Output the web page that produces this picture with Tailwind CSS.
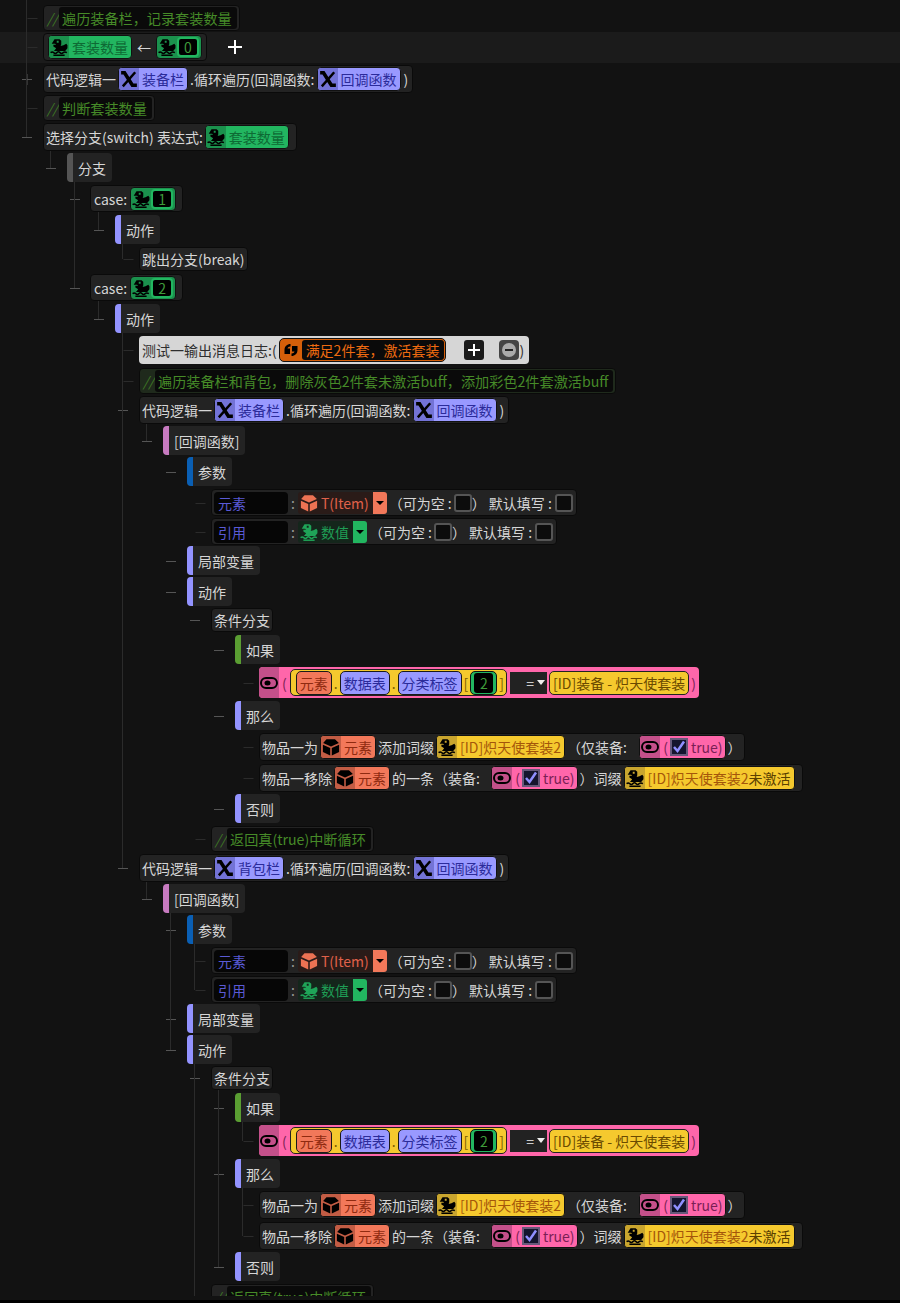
<!DOCTYPE html>
<html lang="zh">
<head>
  <meta charset="UTF-8"/>
  <meta name="viewport" content="width=device-width, initial-scale=1.0"/>
  <title>Logic tree</title>
  <script src="https://cdn.jsdelivr.net/npm/@tailwindcss/browser@4"></script>
</head>
<body class="bg-black m-0">
  <svg class="hidden">
    <symbol id="frog" viewBox="0 0 16 16"><path fill="currentColor" fill-rule="evenodd" d="M4 1h4.500L10 2.500v3L9.500 7l2.500-.5L14.500 5l1 1.500V9l-2 2.500H3.500L5.500 9 3 7.500V6h2.500L4.500 5 1.500 5zM6 2.500V4.200h1.700V2.500z"/><path d="M.5 13c1.200-1 1.800-1 2.800 0s1.800 1 2.800 0 1.800-1 2.800 0 1.800 1 2.800 0 1.800-1 3.300 0" fill="none" stroke="currentColor" stroke-width="1.300"/><path d="M3 15.300h10" fill="none" stroke="currentColor" stroke-width="1.300"/></symbol>
    <symbol id="chi" viewBox="0 0 16 16"><path d="M1 2.500h3L11 13.500h4" fill="none" stroke="currentColor" stroke-width="3.200"/><path d="M13.500 2 2.500 14.500" fill="none" stroke="currentColor" stroke-width="2.200"/></symbol>
    <symbol id="cube" viewBox="0 0 16 16"><path fill="currentColor" d="M4 1h7.500l3.500 3.500-7 3-7-3zM.8 6l6.500 2.900V15.500L.8 12.500zM15.200 6 8.700 8.900V15.500l6.500-3z"/></symbol>
    <symbol id="quote" viewBox="0 0 16 16"><path fill="currentColor" d="M7.500 2C4 2 1.500 4.500 1.500 8v4h5.500V6.500H4.500C4.800 5.300 5.800 4.500 7.500 4.500zM8.500 14c3.500 0 6-2.500 6-6V4H9v5.500h2.500c-.3 1.200-1.300 2-3 2z"/></symbol>
    <symbol id="eye" viewBox="0 0 18 12"><rect x="1" y="1" width="16" height="10" rx="5" fill="none" stroke="currentColor" stroke-width="2"/><ellipse cx="7.500" cy="6" rx="3" ry="2.500" fill="currentColor"/></symbol>
  </svg>

  <div class="h-[1300px] bg-[#121212] font-['Noto_Sans_CJK_SC','Noto_Sans',sans-serif] text-[14px] leading-none text-[#d6d6d6]">
    <div id="tree" class="relative h-[1296px] overflow-hidden pt-[5px]"></div>
  </div>

  <script>
    const pitch = {23:'h-[23px]',24:'h-[24px]',26:'h-[26px]',27:'h-[27px]',28:'h-[28px]',29:'h-[29px]',30:'h-[30px]',31:'h-[31px]',32:'h-[32px]',33:'h-[33px]',34:'h-[34px]'};
    const indent = ['ml-[43px]','ml-[67px]','ml-[90px]','ml-[115px]','ml-[139px]','ml-[163px]','ml-[187px]','ml-[211px]','ml-[235px]','ml-[259px]'];
    const icon = (id, cls) => `<svg class="${cls}"><use href="#${id}"/></svg>`;

    // chip colours
    const tone = {
      green:  {main:'bg-[#22b660] text-[#0e6a34]', side:'bg-[#1b914d]'},
      purple: {main:'bg-[#9999ff] text-[#2b2b9a]', side:'bg-[#7373d6]'},
      red:    {main:'bg-[#f2785a] text-[#8f2a10]', side:'bg-[#c25c44]'},
      yellow: {main:'bg-[#f5c92e] text-[#a4560a]', side:'bg-[#c9a52e]'},
    };
    const ico = {green:'frog', purple:'chi', red:'cube', yellow:'frog'};

    const txt = s => `<span class="whitespace-pre">${s}</span>`;
    const chip = (c, label) => `<span class="flex h-[24px] shrink-0 overflow-hidden rounded-[4px] border border-[#111] ${tone[c].main}">
      <span class="flex w-[20px] items-center justify-center ${tone[c].side}">${icon(ico[c], 'h-[18px] w-[18px] text-black')}</span>
      <span class="flex items-center whitespace-pre pl-[3px] pr-[3px]">${label}</span></span>`;
    const num = n => `<span class="flex h-[24px] shrink-0 overflow-hidden rounded-[4px] border border-[#111] bg-[#1b914d]">
      <span class="flex w-[20px] items-center justify-center">${icon('frog', 'h-[18px] w-[18px] text-black')}</span>
      <span class="my-[1px] mr-[2px] flex w-[22px] items-center justify-center rounded-[4px] border-2 border-[#22b660] bg-black text-[#3f9a3a]">${n}</span></span>`;
    const check = `<span class="h-[18px] w-[18px] shrink-0 rounded-[3px] border-2 border-[#555] bg-[#0c0c0c]"></span>`;
    const eye = `<span class="flex w-[20px] self-stretch items-center justify-center bg-[#c4508a]">${icon('eye', 'h-[12px] w-[18px] text-black')}</span>`;
    const bool = `<span class="flex h-[24px] shrink-0 items-center overflow-hidden rounded-[4px] border border-[#111] bg-[#ff66aa] text-[#7a1f55]">${eye}
      <span class="ml-[3px]">(</span>
      <span class="ml-[2px] mr-[3px] flex h-[18px] w-[18px] items-center justify-center border-2 border-[#66597a] bg-[#15152e]"><svg class="h-[14px] w-[14px]" viewBox="0 0 14 14"><path d="M2 7l3.500 4L12 1.500" fill="none" stroke="#8f8fff" stroke-width="2.500"/></svg></span>
      <span class="whitespace-pre pr-[2px]">true)</span></span>`;

    // box kinds
    const plain = (h, parts) => `<div class="flex ${h} w-fit items-center gap-[2px] rounded-[4px] border border-[#0a0a0a] bg-[#232323] px-[2px]">${parts.join('')}</div>`;
    const tag = (bar, label) => `<div class="flex h-[29px] w-fit items-center overflow-hidden rounded-[4px] bg-[#232323] pr-[6px]"><span class="h-full w-[6px] ${bar}"></span><span class="ml-[5px] whitespace-pre">${label}</span></div>`;
    const note = (label, slash) => `<div class="flex h-[26px] w-fit items-center rounded-[4px] border border-[#0a0a0a] ${slash} pr-[2px]"><span class="w-[15px] pl-[3px] italic text-[#3f7a25]">//</span><span class="flex h-[22px] items-center whitespace-pre rounded-[3px] bg-[#0a0a0a] pl-[3px] pr-[5px] text-[14.15px] text-[#468a28]">${label}</span></div>`;
    const caseBox = n => plain('h-[27px]', [txt('<span class="mx-[1px]">case:</span>'), num(n), '<span class="w-[2px]"></span>']);

    const param = (name, type, c) => {
      const label = c == 'red' ? 'text-[#e0614a]' : 'text-[#1f9d55]';
      const wash = c == 'red' ? 'bg-[#2a1b18]' : 'bg-[#14261b]';
      const btn = c == 'red' ? 'bg-[#f2785a]' : 'bg-[#22b660]';
      const icoCol = c == 'red' ? 'text-[#ec7253]' : 'text-[#1fa458]';
      return `<div class="flex h-[27px] w-fit items-center rounded-[4px] border border-[#0a0a0a] bg-[#232323] px-[2px]">
        <span class="flex h-[22px] w-[74px] items-center rounded-[4px] bg-[#060606] pl-[4px] text-[#5a5ad6]">${name}</span>
        <span class="mx-[3px] text-[#9a9a9a]">:</span>
        <span class="flex h-[22px] items-center rounded-l-[3px] ${wash} pl-[2px] pr-[4px] ${label}">${icon(ico[c], 'mr-[3px] h-[18px] w-[18px] ' + icoCol)}${type}</span>
        <span class="flex h-[22px] w-[14px] items-center justify-center rounded-r-[3px] ${btn}"><svg class="h-[4px] w-[8px]" viewBox="0 0 8 4"><path d="M0 0h8L4 4z"/></svg></span>
        <span class="ml-[2px] whitespace-pre">（可为空 :</span><span class="ml-[2px] flex">${check}</span>
        <span class="whitespace-pre">） </span><span class="mr-[3px] whitespace-pre">默认填写 :</span>${check}<span class="w-[1px]"></span></div>`;
    };

    const sub = (extra, label) => `<span class="flex h-[24px] items-center whitespace-pre rounded-[5px] border border-[#1a1a1a] px-[3px] ${extra}">${label}</span>`;
    const expr = `<div class="flex h-[31px] w-fit items-center overflow-hidden rounded-[4px] bg-[#ff66aa] pr-[3px] text-[#7a1f55]">${eye}
      <span class="ml-[3px] mr-[3px]">(</span>
      <span class="flex h-[27px] items-center gap-[2px] rounded-[5px] border border-[#222] bg-[#f5c92e] pl-[5px] pr-[2px] text-[#7a5a00]">
        ${sub('bg-[#f2785a] text-[#8f2a10]', '元素')}<span>.</span>${sub('bg-[#9999ff] text-[#2b2b9a]', '数据表')}<span>.</span>${sub('bg-[#9999ff] text-[#2b2b9a]', '分类标签')}<span>[</span>
        <span class="flex h-[24px] w-[27px] items-center justify-center rounded-[5px] border border-[#111] bg-[#22b660]"><span class="flex h-[20px] w-[19px] items-center justify-center rounded-[3px] bg-black text-[#3f9a3a]">2</span></span><span>]</span>
      </span>
      <span class="ml-[3px] flex h-[22px] w-[37px] items-center justify-end gap-[3px] bg-[#222] pr-[2px] text-[#ccc]">=<svg class="h-[5px] w-[8px]" viewBox="0 0 8 5"><path d="M0 0h8L4 5z" fill="#eee"/></svg></span>
      <span class="ml-[2px] flex h-[24px] items-center whitespace-pre rounded-[5px] border border-[#222] bg-[#f5c92e] px-[3px] text-[#6a4a00]">[ID]装备 - 炽天使套装</span>
      <span class="ml-[2px]">)</span></div>`;
    const loop = bag => plain('h-[28px]', [txt('代码逻辑一'), chip('purple', bag), txt('.循环遍历(回调函数:'), chip('purple', '回调函数'), txt('<span class="ml-[1px] mr-[2px]">)</span>')]);

    const purpleBar = 'bg-[#9393ff]';
    const noteBg = 'bg-[#232323]';
    const body = [
      [5, 31, 0, 1, tag('bg-[#c77ac0]', '[回调函数]')],
      [6, 32, 0, 1, tag('bg-[#0a5fb4]', '参数')],
      [7, 29, 1, 0, param('元素', 'T(Item)', 'red')],
      [7, 28, 1, 0, param('引用', '数值', 'green')],
      [6, 31, 0, 1, tag(purpleBar, '局部变量')],
      [6, 31, 0, 1, tag(purpleBar, '动作')],
      [7, 27, 0, 1, plain('h-[24px]', [txt('条件分支')])],
      [8, 32, 0, 1, tag('bg-[#5a9e32]', '如果')],
      [9, 34, 1, 0, expr],
      [8, 32, 0, 1, tag(purpleBar, '那么')],
      [9, 31, 1, 0, plain('h-[28px]', [txt('物品一为'), chip('red', '元素'), txt('添加词缀'), chip('yellow', '[ID]炽天使套装2'), txt('（仅装备:  <span class="ml-[4px]"></span>'), bool, txt('）')])],
      [9, 30, 1, 0, plain('h-[28px]', [txt('物品一移除'), chip('red', '元素'), txt('的一条（装备:  <span class="ml-[3px]"></span>'), bool, txt('）词缀'), chip('yellow', '[ID]炽天使套装2<span class="text-[#5a4000]">未激活</span>'), txt(' ')])],
      [8, 32, 0, 1, tag(purpleBar, '否则')],
      [7, 28, 1, 0, note('返回真(true)中断循环', noteBg)],
    ];
    const rows = [
      [0, 28, 1, 0, note('遍历装备栏，记录套装数量', noteBg)],
      [0, 32, 1, 0, `<div class="flex items-center"><div class="flex h-[28px] w-fit items-center gap-[5px] rounded-[4px] border border-[#0a0a0a] bg-[#232323] pl-[4px] pr-[4px]">${chip('green', '套装数量')}${txt('←')}${num(0)}</div><svg class="ml-[21px] h-[14px] w-[14px]" viewBox="0 0 14 14"><path d="M7 0v14M0 7h14" stroke="#fff" stroke-width="2"/></svg></div>`],
      [0, 30, 2, 0, plain('h-[28px]', [txt('代码逻辑一'), chip('purple', '装备栏'), txt('.循环遍历(回调函数:'), chip('purple', '回调函数'), txt('<span class="ml-[1px] mr-[2px]">)</span>')])],
      [0, 28, 1, 0, note('判断套装数量', noteBg)],
      [0, 30, 0, 1, plain('h-[28px]', [txt('选择分支(switch) 表达式:'), chip('green', '套装数量'), txt(' ')])],
      [1, 32, 0, 1, tag('bg-[#555]', '分支')],
      [2, 30, 0, 1, caseBox(1)],
      [3, 32, 0, 1, tag(purpleBar, '动作')],
      [4, 27, 1, 0, plain('h-[24px]', [txt('跳出分支(break)')])],
      [2, 30, 0, 1, caseBox(2)],
      [3, 32, 0, 1, tag(purpleBar, '动作')],
      [4, 32, 1, 0, `<div class="flex h-[28px] w-fit items-center rounded-[4px] bg-[#d6d6d6] px-[3px] text-[#2e2e2e]">${txt('测试一输出消息日志:(')}
        <span class="ml-[2px] flex h-[24px] overflow-hidden rounded-[5px] border border-[#111] bg-[#d45f0a]"><span class="flex w-[22px] items-center justify-center">${icon('quote', 'h-[16px] w-[16px] text-black')}</span><span class="my-[1px] mr-[1px] flex items-center rounded-[3px] bg-[#0a0a0a] pl-[4px] pr-[5px] text-[#ee6a10]">满足2件套，激活套装</span></span>
        <span class="ml-[18px] flex h-[20px] w-[20px] items-center justify-center rounded-[3px] bg-[#1a1a1a]"><svg class="h-[12px] w-[12px]" viewBox="0 0 12 12"><path d="M6 0v12M0 6h12" stroke="#fff" stroke-width="2"/></svg></span>
        <span class="ml-[15px] flex h-[20px] w-[20px] items-center justify-center rounded-[4px] bg-[#444]"><span class="flex h-[14px] w-[14px] items-center justify-center rounded-full bg-[#aaa]"><span class="h-[2px] w-[8px] bg-[#222]"></span></span></span>
        ${txt('<span class="mr-[2px]">)</span>')}</div>`],
      [4, 28, 1, 0, note('遍历装备栏和背包，删除灰色2件套未激活buff，添加彩色2件套激活buff', 'bg-[#1f2a1c]')],
      [4, 30, 0, 1, loop('装备栏')],
      ...body,
      [4, 30, 0, 1, loop('背包栏')],
      ...body,
    ];

    const lines = [];
    let html = '', y = 5;
    const open = [];
    const col = d => 26.5 + 24 * d;
    rows.forEach(r => {
      const [d, h, kind, , box] = r;
      html += `<div class="relative ${pitch[h]} ${indent[d]}">${box}</div>`;
      const boxH = /h-\[(\d+)px\]/.exec(box)[1] * 1;
      const mid = y + Math.round(boxH / 2);
      const x = col(d);
      // kind 1 leaf dash, 2 collapsed plus, 0 expander
      if (kind == 1) lines.push(`<path d="M${x + 1} ${mid + .5}h10" stroke="#2b2b2b"/>`);
      else lines.push(`<path d="M${x - 4.5} ${mid + .5}h10" stroke="#555"/>`);
      if (kind == 2) lines.push(`<path d="M${x + .5} ${mid - 5}v11" stroke="#555"/>`);
      open.length = d + 1;
      open[d] = {x, bottom: mid};
      if (d > 0) {
        const parent = open[d - 1];
        parent.kids = parent.kids || {x, top: parent.bottomEdge, bottom: mid};
        parent.kids.bottom = mid;
      }
      open[d].bottomEdge = y + boxH;
      r.node = open[d];
      y += h;
    });
    rows.forEach(r => { if (r.node.kids) { const k = r.node.kids; lines.push(`<path d="M${k.x} ${k.top}V${k.bottom}" stroke="#2b2b2b"/>`); } });
    lines.push(`<path d="M26.500 0V${5 + 28 + 32 + 30 + 28 + 14}" stroke="#2b2b2b"/>`);

    document.getElementById('tree').innerHTML =
      `<div class="absolute left-0 top-[32px] h-[31px] w-full bg-[#1b1b1b]"></div>` +
      `<svg class="absolute left-0 top-0 h-[1296px] w-[900px]" fill="none">${lines.join('')}</svg>` + html;
  </script>
</body>
</html>
